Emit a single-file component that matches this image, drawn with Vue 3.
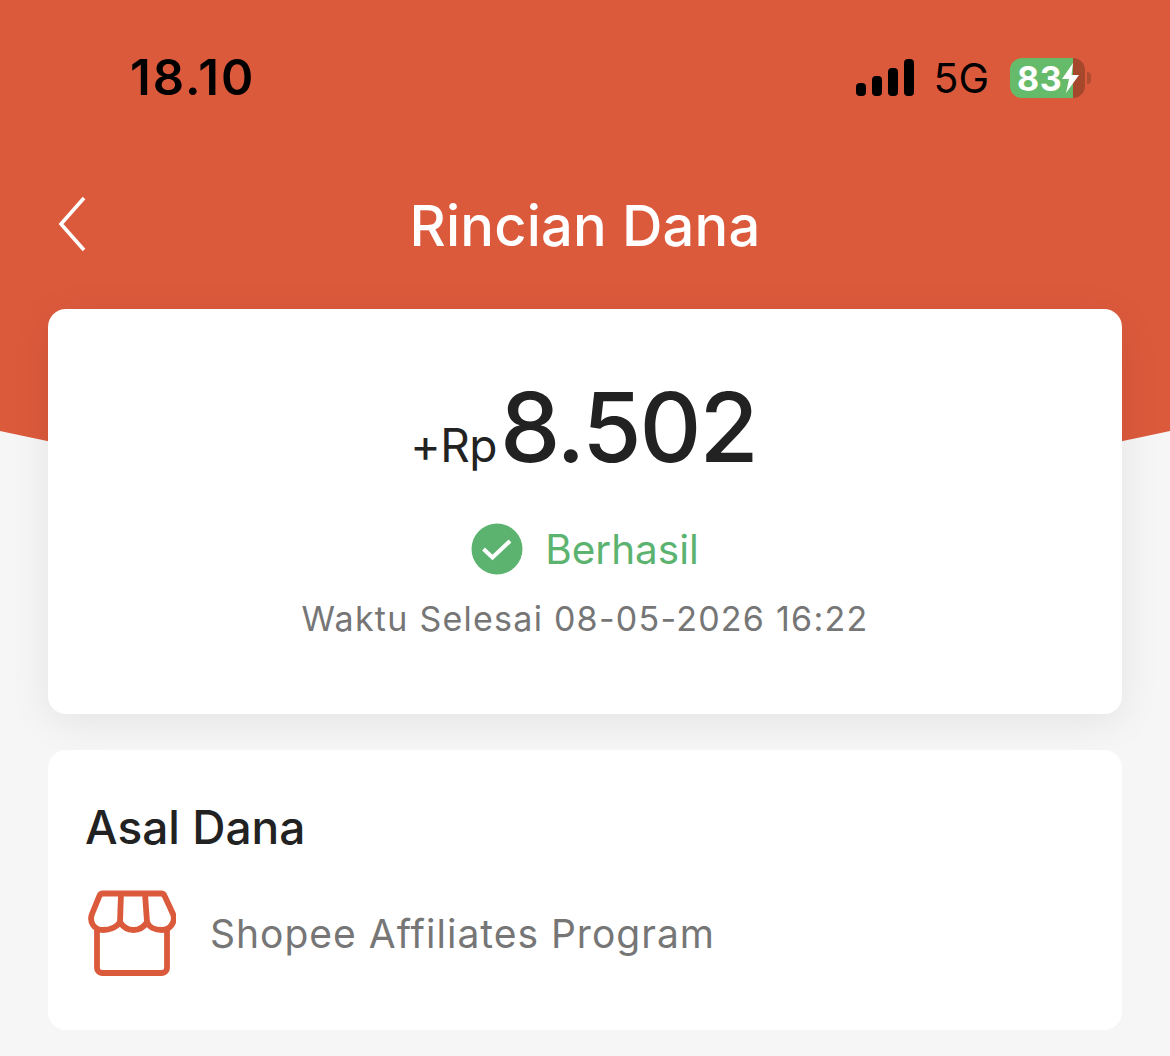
<script setup>
const bars = [13, 20, 28, 37]
</script>

<template>
  <div class="screen">
    <div class="curve"></div>
    <div class="content">
      <div class="status">
        <span class="time">18.10</span>
        <div class="indicators">
          <div class="signal">
            <span v-for="h in bars" :key="h" class="bar" :style="{ height: h + 'px' }"></span>
          </div>
          <span class="net">5G</span>
          <div class="battery">
            <div class="batt-body">
              <span class="batt-num">83</span>
              <svg class="bolt" width="17" height="30" viewBox="0 0 17 30"><path d="M11 0 0 16h7L4 30 17 12H9.500z" fill="#fff"/></svg>
            </div>
            <span class="batt-cap"></span>
          </div>
        </div>
      </div>
      <div class="nav">
        <svg class="back" width="30" height="58" viewBox="0 0 30 58"><path d="M26 3 3 29l23 26" fill="none" stroke="#fff" stroke-width="3.6"/></svg>
        <h1 class="title">Rincian Dana</h1>
      </div>
      <section class="card amount-card">
        <div class="amount"><span class="prefix">+Rp</span><span class="value">8.502</span></div>
        <div class="state">
          <svg width="52" height="52" viewBox="0 0 52 52"><circle cx="26" cy="26" r="25.5" fill="#5cb370"/><path d="M12.500 26 21.500 34.500 39 18" fill="none" stroke="#fff" stroke-width="4"/></svg>
          <span>Berhasil</span>
        </div>
        <p class="when">Waktu Selesai 08-05-2026 16:22</p>
      </section>
      <section class="card source-card">
        <h2>Asal Dana</h2>
        <div class="source">
          <svg class="shop" width="88" height="86" viewBox="0 0 88 86" fill="none" stroke="#dc5a3c" stroke-width="5.800" stroke-linejoin="round">
            <path d="M9 38v40a5 5 0 0 0 5 5h60a5 5 0 0 0 5-5V38"/>
            <path d="M15 3.500h58a4 4 0 0 1 3.600 2.400L85 24C88 32 82 40 74 40 67 40 61 37 59 32 56 37 51 40 45.500 40S35 37 32 32C29 37 22 40 15 40 6 40 1 32 4 24l7.400-18.100A4 4 0 0 1 15 3.500z"/>
            <path d="M33 3.500 32 32M57 3.500 59 32"/>
          </svg>
          <span>Shopee Affiliates Program</span>
        </div>
      </section>
    </div>
  </div>
</template>

<style scoped>
.screen {
  position: relative;
  height: 1056px;
  overflow: hidden;
  background: #f6f6f6;
  font-family: Inter, "Liberation Sans", sans-serif;
}
.curve {
  position: absolute;
  left: -2165px;
  bottom: 562px;
  width: 5500px;
  height: 5500px;
  border-radius: 50%;
  background: #dc5a3c;
}
.content {
  position: relative;
  display: flex;
  flex-direction: column;
}
.status {
  height: 156px;
  display: flex;
  justify-content: space-between;
  padding: 50px 79px 0 130px;
  box-sizing: border-box;
}
.time {
  font-weight: 600;
  font-size: 49px;
  line-height: 56px;
  letter-spacing: 2px;
  color: #000;
}
.indicators {
  display: flex;
  align-items: center;
  height: 56px;
}
.signal {
  display: flex;
  align-items: flex-end;
  gap: 6px;
  width: 58px;
  margin-top: -2px;
}
.bar {
  width: 10px;
  border-radius: 4px;
  background: #000;
}
.net {
  margin-left: 19px;
  font-size: 41px;
  color: #000;
}
.battery {
  margin-left: 21px;
  display: flex;
  align-items: center;
}
.batt-body {
  width: 75px;
  height: 40px;
  border-radius: 12px;
  box-sizing: border-box;
  background: linear-gradient(90deg, #66bb6a 0, #66bb6a 63px, #a5482c 63px);
  display: flex;
  align-items: center;
  padding-left: 7px;
}
.batt-num {
  color: #fff;
  font-weight: 700;
  font-size: 34px;
  letter-spacing: 0.500px;
}
.batt-cap {
  width: 4px;
  height: 12px;
  margin-left: 2px;
  border-radius: 0 6px 6px 0;
  background: #b04c30;
}
.nav {
  position: relative;
  height: 153px;
  display: flex;
  justify-content: center;
}
.back {
  position: absolute;
  left: 58px;
  top: 39px;
}
.title {
  margin: 0;
  padding-top: 36px;
  font-size: 56px;
  line-height: 68px;
  font-weight: 500;
  letter-spacing: 0.200px;
  color: #fff;
}
.card {
  margin: 0 48px;
  background: #fff;
  border-radius: 18px;
}
.amount-card {
  height: 405px;
  box-shadow: 0 8px 40px rgba(0, 0, 0, 0.08);
  display: flex;
  flex-direction: column;
  align-items: center;
}
.amount {
  margin-top: 58px;
  margin-bottom: 2px;
  margin-right: 3px;
  display: flex;
  align-items: baseline;
  height: 120px;
  color: #222;
  line-height: 120px;
}
.prefix {
  font-size: 46px;
  font-weight: 400;
  letter-spacing: -0.500px;
  margin-right: 3px;
}
.value {
  font-size: 96px;
  font-weight: 500;
  letter-spacing: -2px;
}
.state {
  margin-top: 34px;
  display: flex;
  align-items: center;
  gap: 22px;
  color: #5cb370;
  font-size: 40.500px;
}
.when {
  margin: 22px 0 0;
  font-size: 34px;
  line-height: 44px;
  letter-spacing: 1.250px;
  color: #767676;
}
.source-card {
  margin-top: 36px;
  height: 280px;
  padding: 47px 38px 0;
  box-sizing: border-box;
}
h2 {
  margin: 0 0 0 -1px;
  font-size: 46px;
  line-height: 60px;
  font-weight: 500;
  color: #222;
}
.source {
  display: flex;
  align-items: center;
  gap: 34px;
  margin-top: 33px;
  margin-left: 2px;
  font-size: 39px;
  letter-spacing: 1px;
  color: #767676;
}
</style>
